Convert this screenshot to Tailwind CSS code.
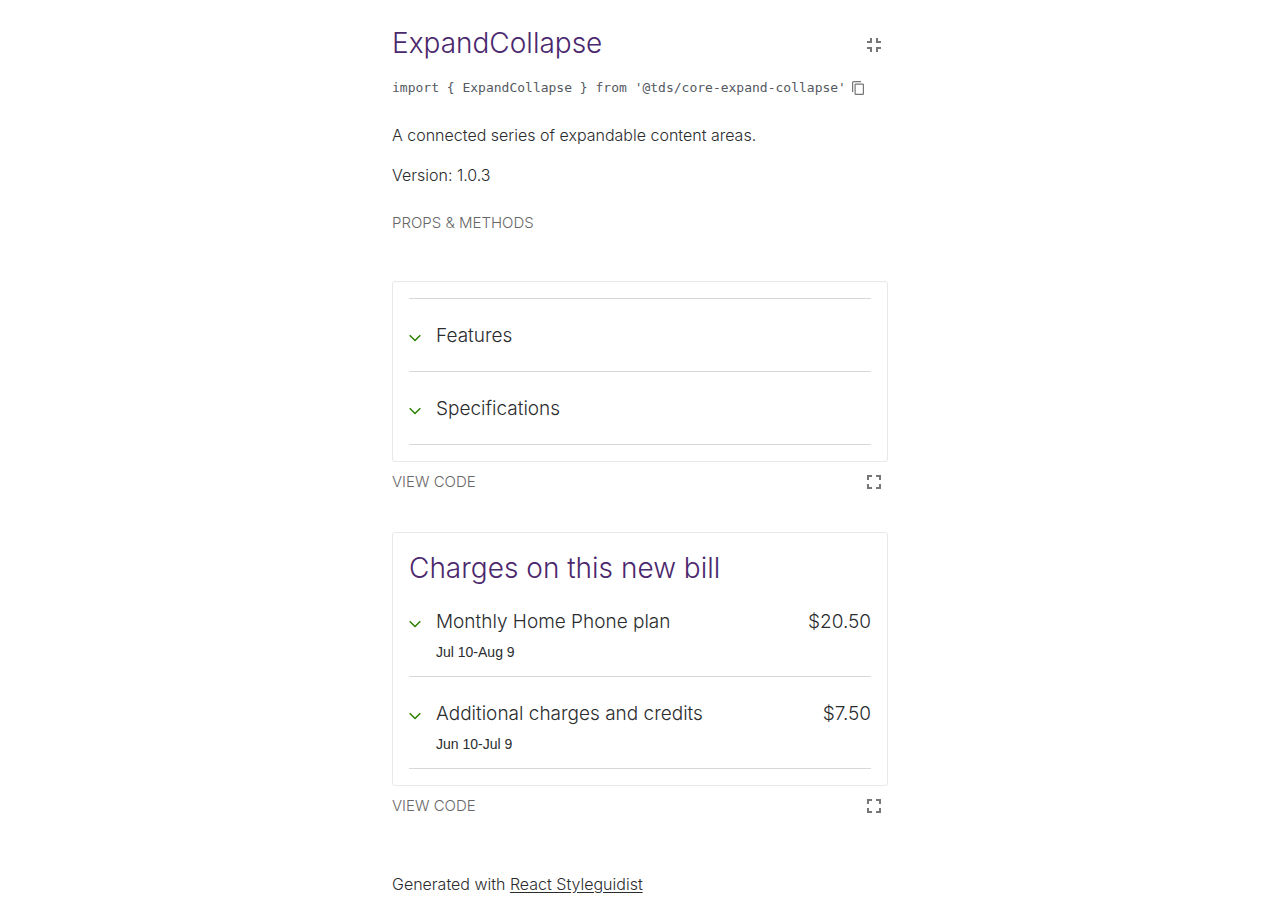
<!DOCTYPE html>
<html lang="en">
<head>
<meta charset="utf-8">
<meta name="viewport" content="width=device-width, initial-scale=1">
<title>ExpandCollapse</title>
<script src="https://cdn.jsdelivr.net/npm/@tailwindcss/browser@4"></script>
</head>
<body class="bg-white font-['Inter','Liberation_Sans',sans-serif] text-base font-light text-[#2a2c2e]">
<svg class="hidden" aria-hidden="true">
  <symbol id="chevron" viewBox="0 0 12 8"><path d="M0.7 1.2 6 6.5l5.3-5.3" fill="none" stroke="#2b8000" stroke-width="1.5"/></symbol>
  <symbol id="expand" viewBox="0 0 14 14"><path d="M0 5V0h5v2H2v3zM9 0h5v5h-2V2H9zM0 9h2v3h3v2H0zM12 9h2v5H9v-2h3z" fill="#767676"/></symbol>
  <symbol id="collapse" viewBox="0 0 14 14"><path d="M3 0h2v5H0V3h3zM9 0h2v3h3v2H9zM0 9h5v5H3v-3H0zM9 9h5v2h-3v3H9z" fill="#767676"/></symbol>
</svg>
<main class="mx-auto max-w-[528px] px-4 pt-6">
  <header class="flex items-start justify-between">
    <h1 class="text-[28px] leading-[38px] text-[#4b286d]">ExpandCollapse</h1>
    <a href="#all" aria-label="Show all components" class="mt-[14px] mr-[7px]"><svg class="size-[14px]"><use href="#collapse"/></svg></a>
  </header>
  <div class="mt-[14px] flex items-center gap-1.5 text-[#54595f]">
    <code class="font-['DejaVu_Sans_Mono',monospace] text-[13px] font-normal leading-6 whitespace-pre">import { ExpandCollapse } from '@tds/core-expand-collapse'</code>
    <button type="button" aria-label="Copy to clipboard"><svg class="h-[14px] w-3" viewBox="0 0 12 14" fill="none" stroke="#767676"><path d="M9 .6H1.6a1 1 0 0 0-1 1V11" stroke-width="1.2"/><rect x="3.1" y="3.1" width="8.3" height="10.3" rx=".7" stroke-width="1.2"/></svg></button>
  </div>
  <p class="mt-[23px] leading-6">A connected series of expandable content areas.</p>
  <p class="mt-4 leading-6">Version: 1.0.3</p>
  <button type="button" class="mt-6 block text-[15px] leading-6 text-[#676767] uppercase">Props &amp; methods</button>

  <section class="mt-[46px]">
    <div class="rounded-[3px] border border-[#e8e8e8] p-4">
      <div class="border-t border-[#d8d8d8]">
        <button type="button" class="flex w-full items-start gap-[15px] border-b border-[#d8d8d8] pt-[23px] pb-[21px] text-left text-[19px] leading-7"><svg class="mt-3 h-2 w-3"><use href="#chevron"/></svg><span>Features</span></button>
        <button type="button" class="flex w-full items-start gap-[15px] border-b border-[#d8d8d8] pt-[23px] pb-[21px] text-left text-[19px] leading-7"><svg class="mt-3 h-2 w-3"><use href="#chevron"/></svg><span>Specifications</span></button>
      </div>
    </div>
    <div class="mt-2 flex items-center justify-between">
      <button type="button" class="text-[15px] leading-6 text-[#676767] uppercase">View code</button>
      <a href="#example-1" aria-label="Open isolated example" class="mr-[7px]"><svg class="size-[14px]"><use href="#expand"/></svg></a>
    </div>
  </section>

  <section class="mt-[38px]">
    <div class="rounded-[3px] border border-[#e8e8e8] p-4">
      <h2 class="text-[28px] leading-[38px] text-[#4b286d]">Charges on this new bill</h2>
      <button type="button" class="flex w-full items-start gap-[15px] border-b border-[#d8d8d8] pt-[21px] pb-3 text-left">
        <svg class="mt-3 h-2 w-3"><use href="#chevron"/></svg>
        <span class="flex-1"><span class="block text-[19px] leading-7">Monthly Home Phone plan</span><span class="mt-1 block font-['Liberation_Sans',sans-serif] text-sm leading-6 font-normal">Jul 10-Aug 9</span></span>
        <span class="text-[19px] leading-7">$20.50</span>
      </button>
      <button type="button" class="flex w-full items-start gap-[15px] border-b border-[#d8d8d8] pt-[23px] pb-3 text-left">
        <svg class="mt-3 h-2 w-3"><use href="#chevron"/></svg>
        <span class="flex-1"><span class="block text-[19px] leading-7">Additional charges and credits</span><span class="mt-1 block font-['Liberation_Sans',sans-serif] text-sm leading-6 font-normal">Jun 10-Jul 9</span></span>
        <span class="text-[19px] leading-7">$7.50</span>
      </button>
    </div>
    <div class="mt-2 flex items-center justify-between">
      <button type="button" class="text-[15px] leading-6 text-[#676767] uppercase">View code</button>
      <a href="#example-2" aria-label="Open isolated example" class="mr-[7px]"><svg class="size-[14px]"><use href="#expand"/></svg></a>
    </div>
  </section>

  <footer class="mt-[54px] leading-6">Generated with <a href="#styleguidist" class="underline underline-offset-2">React Styleguidist</a></footer>
</main>
</body>
</html>
